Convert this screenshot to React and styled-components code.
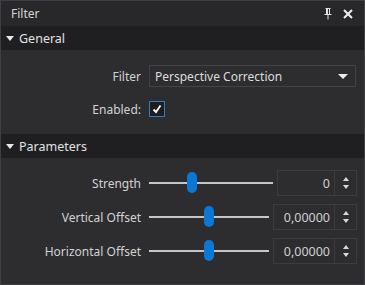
import styled, { createGlobalStyle } from "styled-components";

const Global = createGlobalStyle`
  html, body { margin: 0; padding: 0; background: #2d2d30; }
  body { font-family: "Segoe UI", "Noto Sans", "Open Sans", sans-serif; }
`;

// Whole dock panel
const Panel = styled.div`
  width: 365px;
  height: 285px;
  box-sizing: border-box;
  border: 1px solid #3f3f43;
  background: #2d2d30;
  color: #d6d6d6;
  font-size: 12px;
  display: flex;
  flex-direction: column;
`;

const TitleBar = styled.div`
  height: 25px;
  background: #28282b;
  display: flex;
  align-items: center;
  padding: 0 6px 0 10px;
  color: #d4d4d4;
`;

const TitleText = styled.div`
  flex: 1;
`;

const TitleButton = styled.div`
  width: 20px;
  height: 20px;
  display: flex;
  align-items: center;
  justify-content: center;
`;

const SectionHeader = styled.div`
  height: 24px;
  background: #1f1f21;
  display: flex;
  align-items: center;
  gap: 5px;
  padding-left: 5px;
  color: #e2e2e2;
  font-size: 12.5px;
`;

const Caret = styled.span`
  width: 0;
  height: 0;
  border-left: 4px solid transparent;
  border-right: 4px solid transparent;
  border-top: 5px solid #e8e8e8;
`;

const Form = styled.div`
  display: grid;
  grid-template-columns: 140px 1fr;
  grid-auto-rows: 26px;
  column-gap: 8px;
  row-gap: ${(p) => p.$gap}px;
  padding: ${(p) => p.$pad};
`;

const Label = styled.div`
  text-align: right;
  align-self: center;
  color: #d2d2d2;
`;

const Combo = styled.div`
  align-self: center;
  height: 22px;
  box-sizing: border-box;
  border: 1px solid #434346;
  margin-right: 8px;
  display: flex;
  align-items: center;
  padding: 0 4px 0 5px;
  color: #dcdcdc;
`;

const ComboText = styled.div`
  flex: 1;
`;

const ComboArrow = styled.span`
  width: 0;
  height: 0;
  border-left: 5px solid transparent;
  border-right: 5px solid transparent;
  border-top: 5px solid #ececec;
  margin-right: 3px;
`;

const Check = styled.div`
  align-self: center;
  width: 16px;
  height: 16px;
  box-sizing: border-box;
  border: 1px solid #2f7fc4;
  background: #1e1e20;
  display: flex;
  align-items: center;
  justify-content: center;
`;

const SliderRow = styled.div`
  display: flex;
  align-items: center;
  gap: 4px;
  margin-right: 7px;
`;

const Track = styled.div`
  flex: 1;
  height: 2px;
  background: #c6c6c6;
  position: relative;
`;

const Handle = styled.div`
  position: absolute;
  top: -10px;
  width: 10px;
  height: 21px;
  border-radius: 5px;
  background: #0a78d4;
  margin-left: -5px;
`;

const Spin = styled.div`
  width: ${(p) => p.$w}px;
  height: 26px;
  box-sizing: border-box;
  border: 1px solid #3c3c40;
  display: flex;
`;

const SpinValue = styled.div`
  flex: 1;
  display: flex;
  align-items: center;
  justify-content: flex-end;
  padding-right: 4px;
  color: #cfcfcf;
  font-size: 12.5px;
`;

const SpinButtons = styled.div`
  width: 21px;
  border-left: 1px solid #3c3c40;
  display: flex;
  flex-direction: column;
  align-items: center;
  justify-content: center;
  gap: 4px;
`;

const Tri = styled.span`
  width: 0;
  height: 0;
  border-left: 3.5px solid transparent;
  border-right: 3.5px solid transparent;
  ${(p) => (p.$up ? "border-bottom" : "border-top")}: 4px solid #dadada;
`;

function Slider({ label, value, pos, width }) {
  return (
    <>
      <Label>{label}</Label>
      <SliderRow>
        <Track>
          <Handle style={{ left: `calc(5px + (100% - 10px) * ${pos})` }} />
        </Track>
        <Spin $w={width}>
          <SpinValue>{value}</SpinValue>
          <SpinButtons>
            <Tri $up />
            <Tri />
          </SpinButtons>
        </Spin>
      </SliderRow>
    </>
  );
}

export default function App() {
  return (
    <>
      <Global />
      <Panel>
        <TitleBar>
          <TitleText>Filter</TitleText>
          <TitleButton>
            <svg width="8" height="12" viewBox="0 0 8 12">
              <path d="M1.5 0.5h5M2.5 0.5v6M5.5 0.5v6M0.5 6.5h7M4 6.5v5" stroke="#e0e0e0" strokeWidth="1" fill="none" />
              <rect x="2.5" y="0.5" width="1.5" height="6" fill="#e0e0e0" />
            </svg>
          </TitleButton>
          <TitleButton>
            <svg width="10" height="10" viewBox="0 0 10 10">
              <path d="M1 1L9 9M9 1L1 9" stroke="#f0f0f0" strokeWidth="2" />
            </svg>
          </TitleButton>
        </TitleBar>
        <SectionHeader>
          <Caret />
          General
        </SectionHeader>
        <Form $gap={7} $pad="13px 0 12px 0">
          <Label>Filter</Label>
          <Combo>
            <ComboText>Perspective Correction</ComboText>
            <ComboArrow />
          </Combo>
          <Label>Enabled:</Label>
          <Check>
            <svg width="10" height="10" viewBox="0 0 10 10">
              <path d="M1.5 5.5L4 8L8.5 1.5" stroke="#ffffff" strokeWidth="1.8" fill="none" />
            </svg>
          </Check>
        </Form>
        <SectionHeader>
          <Caret />
          Parameters
        </SectionHeader>
        <Form $gap={8} $pad="12px 0 0 0">
          <Slider label="Strength" value="0" pos={0.33} width={80} />
          <Slider label="Vertical Offset" value="0,00000" pos={0.5} width={84} />
          <Slider label="Horizontal Offset" value="0,00000" pos={0.5} width={84} />
        </Form>
      </Panel>
    </>
  );
}
